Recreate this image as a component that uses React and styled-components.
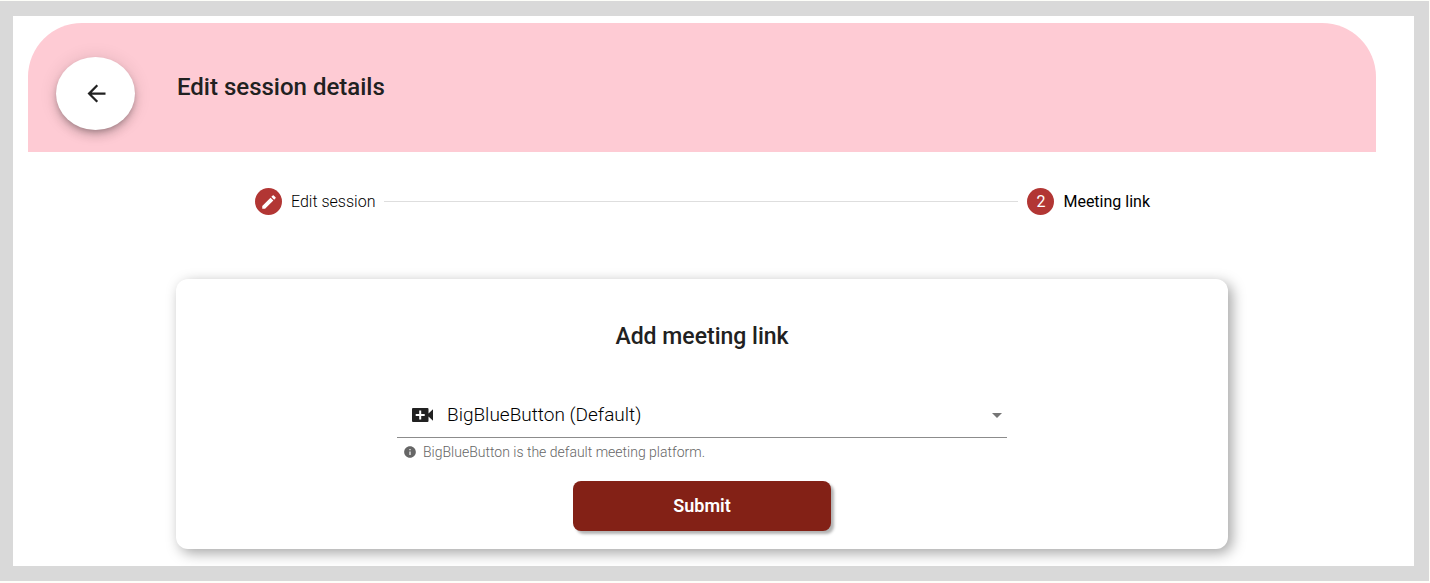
import React from "react";
import styled, { createGlobalStyle } from "styled-components";

const GlobalStyle = createGlobalStyle`
  *, *::before, *::after { box-sizing: border-box; }
  body {
    margin: 0;
    background: #fdfef9;
    color: #212121;
    font-family: Roboto, "Liberation Sans", sans-serif;
  }
`;

const Frame = styled.div`
  margin: 1px 1px 2px 0;
  padding: 15px 15px 15px 13px;
  background: #d9d9d9;
`;

const Page = styled.main`
  padding: 7px 38px 17px 15px;
  background: #fff;
`;

const Header = styled.header`
  display: flex;
  align-items: flex-start;
  gap: 42px;
  min-height: 129px;
  padding: 34px 28px 22px;
  border-radius: 54px 54px 0 0;
  background: #fecbd4;
`;

const BackButton = styled.button`
  display: grid;
  place-items: center;
  width: 79px;
  height: 73px;
  padding: 0 0 0 2px;
  border: 0;
  border-radius: 50%;
  background: #fff;
  color: #212121;
  cursor: pointer;
  box-shadow: 0 3px 5px -1px rgba(0, 0, 0, 0.2), 0 6px 10px rgba(0, 0, 0, 0.14),
    0 1px 18px rgba(0, 0, 0, 0.12);
`;

const Title = styled.h1`
  margin: 14px 0 0;
  font-size: 24px;
  line-height: 32px;
  font-weight: 500;
`;

const Stepper = styled.ol`
  display: flex;
  align-items: center;
  gap: 9px;
  margin: 36px 226px 64px 227px;
  padding: 0;
  list-style: none;
`;

const Step = styled.li`
  display: flex;
  align-items: center;
  gap: 9px;
  color: #000;
  font-size: 16px;
  line-height: 24px;
  font-weight: ${(p) => (p.$current ? 400 : 300)};
`;

const StepLine = styled.li`
  flex: 1;
  height: 1px;
  background: #dedede;
`;

const StepBadge = styled.span`
  display: grid;
  place-items: center;
  width: 27px;
  height: 27px;
  border-radius: 50%;
  background: #b23634;
  color: #fff;
`;

const Card = styled.form`
  display: flex;
  flex-direction: column;
  align-items: center;
  width: 78%;
  margin: 0 auto;
  padding: 42px 24px 18px;
  border-radius: 12px;
  background: #fff;
  box-shadow: 4px 4px 14px rgba(0, 0, 0, 0.36);
`;

const CardTitle = styled.h2`
  margin: 0 0 40px;
  font-size: 23px;
  line-height: 32px;
  font-weight: 500;
`;

const Field = styled.div`
  width: 100%;
  max-width: 610px;
`;

const SelectRow = styled.div`
  display: grid;
  grid-template-columns: 50px 1fr 18px;
  align-items: center;
  border-bottom: 1px solid #8c8c8c;

  > svg {
    grid-row: 1;
    pointer-events: none;
    z-index: 1;
  }
  > svg:first-of-type {
    grid-column: 1;
    margin-left: 15px;
  }
  > svg:last-of-type {
    grid-column: 3;
    margin-left: 3px;
  }
`;

const Select = styled.select`
  grid-row: 1;
  grid-column: 1 / -1;
  height: 44px;
  padding: 0 24px 0 50px;
  border: 0;
  appearance: none;
  background: transparent;
  color: #000;
  font: 300 19px/24px Roboto, "Liberation Sans", sans-serif;
`;

const Hint = styled.p`
  display: flex;
  align-items: center;
  gap: 6px;
  margin: 4px 0 19px;
  padding-left: 6px;
  color: #666;
  font-size: 14px;
  line-height: 20px;
  font-weight: 300;
`;

const SubmitButton = styled.button`
  width: 258px;
  height: 50px;
  border: 0;
  border-radius: 8px;
  background: #832116;
  color: #fff;
  font: 600 18px/24px Roboto, "Liberation Sans", sans-serif;
  cursor: pointer;
  box-shadow: 3px 3px 3px rgba(0, 0, 0, 0.3);
`;

const Icon = ({ size, d }) => (
  <svg width={size} height={size} viewBox="0 0 24 24" fill="currentColor" aria-hidden="true">
    <path d={d} />
  </svg>
);

const ICONS = {
  back: "M20 11H7.83l5.59-5.59L12 4l-8 8 8 8 1.41-1.41L7.83 13H20v-2z",
  pencil:
    "M3 17.25V21h3.75L17.81 9.94l-3.75-3.75L3 17.25zM20.71 7.04a.996.996 0 0 0 0-1.41l-2.34-2.34a.996.996 0 0 0-1.41 0l-1.83 1.83 3.75 3.75 1.83-1.83z",
  info: "M12 2C6.48 2 2 6.48 2 12s4.48 10 10 10 10-4.48 10-10S17.52 2 12 2zm1 15h-2v-6h2v6zm0-8h-2V7h2v2z",
};

export default function App() {
  return (
    <>
      <GlobalStyle />
      <Frame>
        <Page>
          <Header>
            <BackButton type="button" aria-label="Back">
              <Icon size={27} d={ICONS.back} />
            </BackButton>
            <Title>Edit session details</Title>
          </Header>
          <Stepper>
            <Step>
              <StepBadge>
                <Icon size={18} d={ICONS.pencil} />
              </StepBadge>
              Edit session
            </Step>
            <StepLine aria-hidden="true" />
            <Step $current aria-current="step">
              <StepBadge>2</StepBadge>
              Meeting link
            </Step>
          </Stepper>
          <Card onSubmit={(e) => e.preventDefault()}>
            <CardTitle id="meeting-title">Add meeting link</CardTitle>
            <Field>
              <SelectRow>
                <svg width="21" height="14" viewBox="0 0 21 14" fill="#212121" aria-hidden="true">
                  <path
                    fillRule="evenodd"
                    d="M1 0h14.500a1 1 0 0 1 1 1v4.500L21 1.200v11.600L16.500 8.500V13a1 1 0 0 1-1 1H1a1 1 0 0 1-1-1V1a1 1 0 0 1 1-1zM7.200 2.500v3.500H3.700v2h3.500v3.500h2V8h3.500V6H9.200V2.500z"
                  />
                </svg>
                <Select aria-labelledby="meeting-title" aria-describedby="meeting-hint">
                  <option>BigBlueButton (Default)</option>
                </Select>
                <svg width="10" height="5" viewBox="0 0 10 5" fill="#757575" aria-hidden="true">
                  <path d="M0 0h10L5 5z" />
                </svg>
              </SelectRow>
              <Hint id="meeting-hint">
                <Icon size={14} d={ICONS.info} />
                BigBlueButton is the default meeting platform.
              </Hint>
            </Field>
            <SubmitButton type="submit">Submit</SubmitButton>
          </Card>
        </Page>
      </Frame>
    </>
  );
}
